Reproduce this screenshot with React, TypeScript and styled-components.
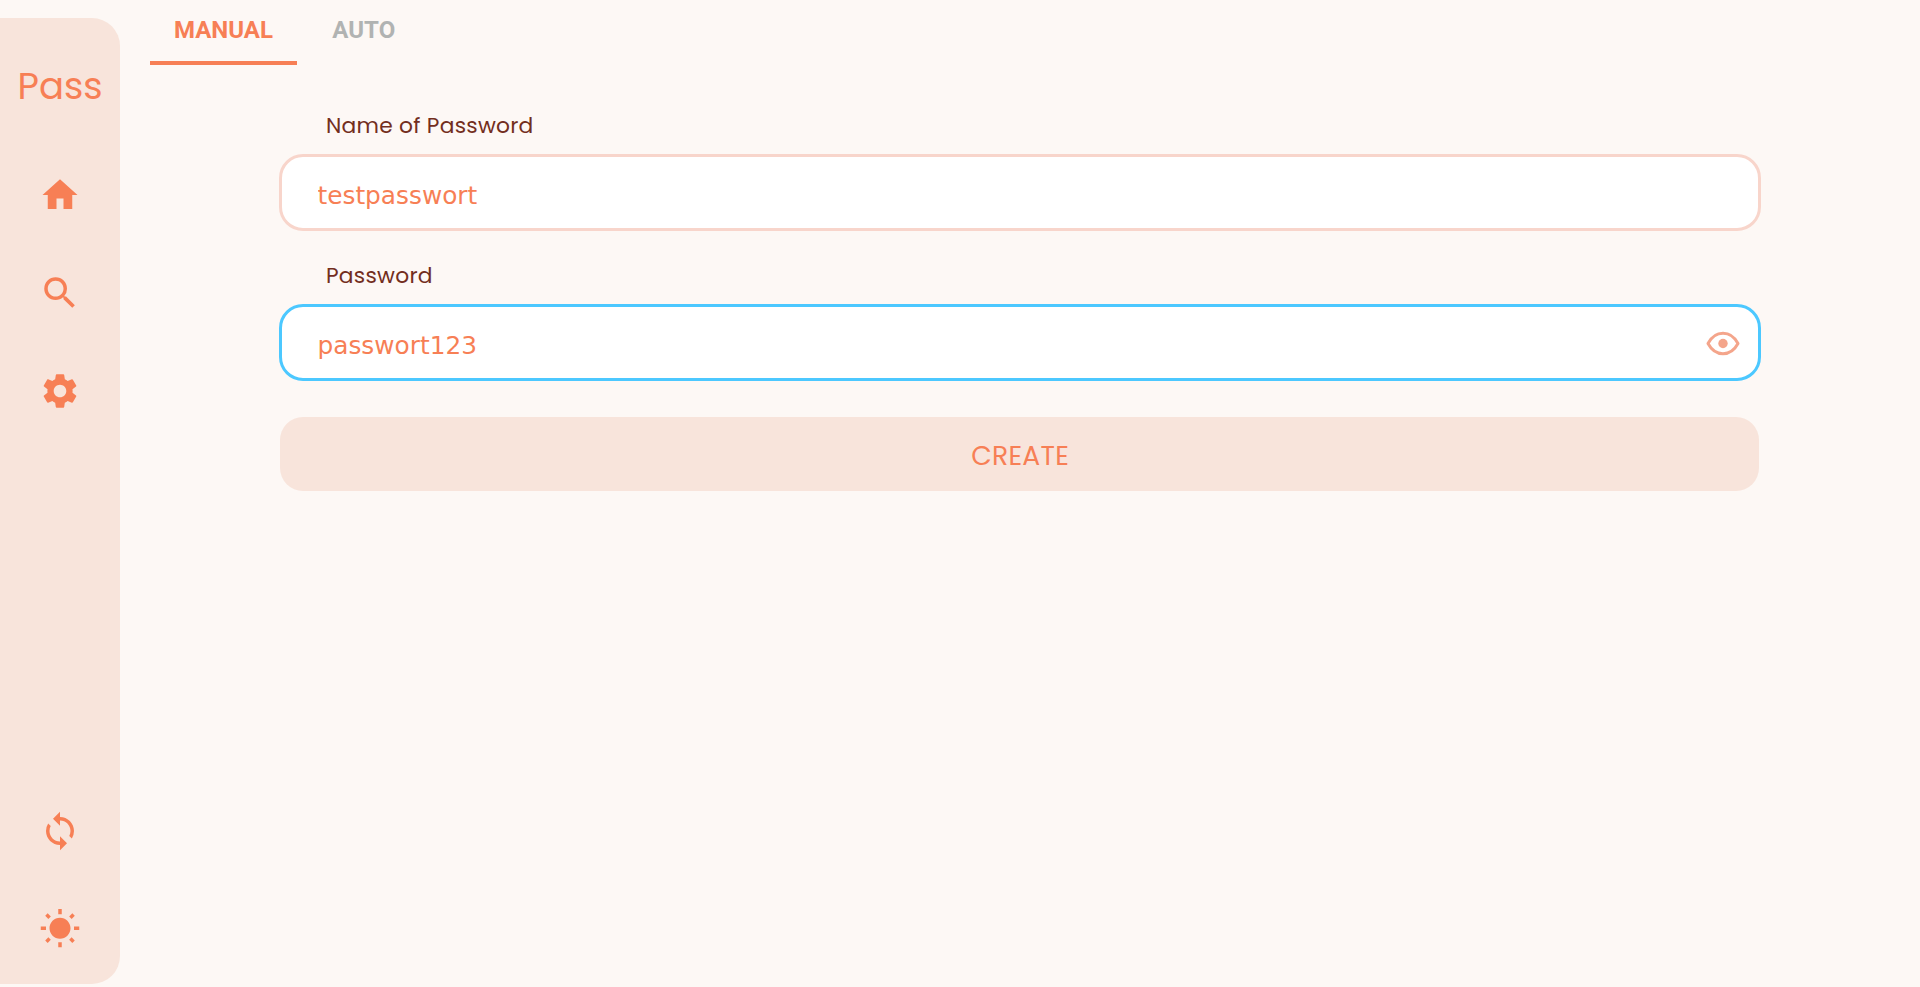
import React from "react";
import styled, { createGlobalStyle } from "styled-components";
import { MdHome, MdSearch, MdSettings, MdSync, MdWbSunny } from "react-icons/md";

const geometric = `Poppins, Inter, "Open Sans", sans-serif`;

const GlobalStyle = createGlobalStyle`
  * { box-sizing: border-box; }
  body { margin: 0; background: #fdf8f5; overflow: hidden; }
`;

const Page = styled.div`
  display: flex;
  height: 987px;
  background: #fdf8f5;
`;

const Sidebar = styled.nav`
  display: flex;
  flex-direction: column;
  align-items: center;
  width: 120px;
  height: 966px;
  margin-top: 18.4px;
  padding: 44px 0 34px;
  background: #f8e4db;
  border-radius: 0 28px 28px 0;
  color: #f77f55;
`;

const Brand = styled.div`
  font: 400 37px/48px ${geometric};
  margin-bottom: 63.6px;
`;

const IconGroup = styled.div<{ $bottom?: boolean }>`
  display: flex;
  flex-direction: column;
  gap: ${(p) => (p.$bottom ? "56px" : "55.8px")};
  margin-top: ${(p) => (p.$bottom ? "auto" : "0")};
`;

const IconButton = styled.button`
  display: flex;
  padding: 0;
  border: 0;
  background: none;
  color: inherit;
  font-size: 42px;
`;

const Main = styled.main`
  flex: 1;
  padding-left: 30px;
`;

const Tabs = styled.div`
  display: flex;
  gap: 11.4px;
  height: 65px;
`;

const Tab = styled.button<{ $active?: boolean }>`
  height: 65px;
  padding: 0 24px 1px;
  border: 0;
  border-bottom: 4.5px solid ${(p) => (p.$active ? "#f77f55" : "transparent")};
  background: none;
  color: ${(p) => (p.$active ? "#f77f55" : "#b1b3b2")};
  font: 700 24px/54px Roboto, sans-serif;
`;

const Form = styled.form`
  width: 1482px;
  margin: 44px 0 0 129px;
`;

const Label = styled.label`
  display: block;
  height: 45px;
  padding-left: 47px;
  font: 400 21.8px/33px ${geometric};
  letter-spacing: 0.25px;
  color: #732e1d;
`;

const Field = styled.div<{ $focused?: boolean }>`
  display: flex;
  align-items: center;
  height: 77px;
  margin-bottom: 28px;
  padding: 0 17px 0 35.5px;
  border: 3px solid ${(p) => (p.$focused ? "#4cc8ff" : "#f8d5cb")};
  border-radius: 24px;
  background: #fff;
`;

const Input = styled.input`
  flex: 1;
  padding: 6px 0 0;
  border: 0;
  outline: 0;
  background: none;
  color: #f77f55;
  font: 24.8px "DejaVu Sans", sans-serif;
`;

const CreateButton = styled.button`
  display: block;
  width: 1479px;
  height: 74px;
  margin: 36.3px 0 0 1.2px;
  padding: 4px 0 0 1px;
  border: 0;
  border-radius: 23px;
  background: #f8e4db;
  color: #f77f55;
  font: 400 26.6px ${geometric};
  letter-spacing: 0.3px;
`;

const EyeIcon = () => (
  <svg width="36" height="28" viewBox="0 0 36 28" fill="none">
    <path
      d="M3 14.5C6.500 8 11.500 4.300 18 4.300S29.500 8 33 14.500C29.500 21 24.500 24.700 18 24.700S6.500 21 3 14.500Z"
      stroke="#f4a58b"
      strokeWidth="3"
      strokeLinejoin="round"
    />
    <circle cx="18" cy="14.5" r="4.7" fill="#f4a58b" />
  </svg>
);

export default function App() {
  return (
    <Page>
      <GlobalStyle />
      <Sidebar>
        <Brand>Pass</Brand>
        <IconGroup>
          <IconButton aria-label="Home"><MdHome /></IconButton>
          <IconButton aria-label="Search"><MdSearch /></IconButton>
          <IconButton aria-label="Settings"><MdSettings /></IconButton>
        </IconGroup>
        <IconGroup $bottom>
          <IconButton aria-label="Sync"><MdSync /></IconButton>
          <IconButton aria-label="Theme"><MdWbSunny /></IconButton>
        </IconGroup>
      </Sidebar>
      <Main>
        <Tabs>
          <Tab $active>MANUAL</Tab>
          <Tab>AUTO</Tab>
        </Tabs>
        <Form>
          <Label htmlFor="name">Name of Password</Label>
          <Field>
            <Input id="name" defaultValue="testpasswort" />
          </Field>
          <Label htmlFor="password">Password</Label>
          <Field $focused>
            <Input id="password" defaultValue="passwort123" />
            <EyeIcon />
          </Field>
          <CreateButton type="button">CREATE</CreateButton>
        </Form>
      </Main>
    </Page>
  );
}
